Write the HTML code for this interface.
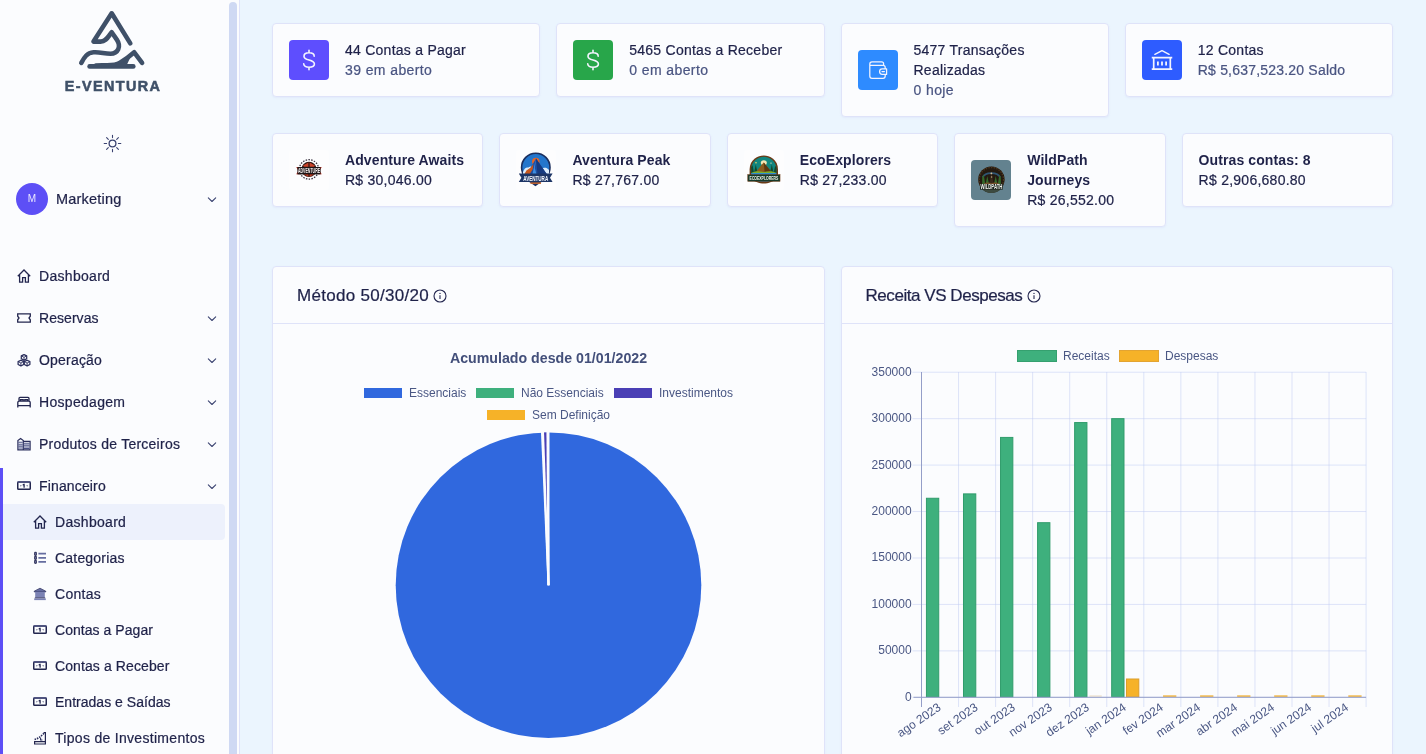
<!DOCTYPE html>
<html lang="pt-BR">
<head>
<meta charset="utf-8">
<title>E-Ventura - Financeiro</title>
<style>
*{box-sizing:border-box;margin:0;padding:0}
html,body{width:1426px;height:754px;overflow:hidden}
body{font-family:"Liberation Sans",sans-serif;font-size:14px;color:#1f2249;background:#ebf5fe;position:relative}
.abs{position:absolute}
/* ---------- sidebar ---------- */
#side{position:absolute;left:0;top:0;width:240px;height:754px;background:#fbfcfe;border-right:1px solid #dfe3f9;overflow:hidden}
#thumb{position:absolute;left:229px;top:2px;width:8px;height:800px;border-radius:4px;background:#cfd9f3}
#logo{position:absolute;left:60px;top:4px;width:104px;height:92px}
.nav{position:absolute;left:0;width:229px;height:36px;font-size:14px;line-height:36px;color:#1f2249;white-space:nowrap}
.nav svg.ic{position:absolute;left:17px;top:11px;width:14px;height:14px}
.nav span{position:absolute;left:39px;top:0;letter-spacing:.3px}
.nav svg.ch{position:absolute;left:207px;top:15px;width:10px;height:8px}
.sub svg.ic{left:33px}
.sub span{left:55px}
#fin{position:absolute;left:0;top:468px;width:3px;height:300px;background:#5d4ff6}
#act{position:absolute;left:3px;top:504px;width:222px;height:36px;background:#edf1fc;border-radius:0 4px 4px 0}
/* ---------- main ---------- */
#main{position:absolute;left:0;top:0;width:1426px;height:754px;will-change:transform}
#sidecontent{position:absolute;left:0;top:0;width:239px;height:754px;will-change:transform}
.card{position:absolute;background:#fbfcfe;border:1px solid #dfe3f9;border-radius:4px;box-shadow:0 1px 2px rgba(190,200,240,.22)}
.kpi .ib{position:absolute;left:16px;top:16px;width:40px;height:40px;border-radius:4px}
.kpi .tx{position:absolute;left:72px;top:16px;line-height:20px;font-size:14px;white-space:nowrap;letter-spacing:.25px}
.kpi .tx b{font-weight:bold;letter-spacing:.1px}
.kpi .tx i{font-style:normal;color:#4a5582;letter-spacing:.4px}
.ph{position:absolute;left:0;top:0;right:0;height:57px;border-bottom:1px solid #dfe3f9}
.ph h3{position:absolute;left:24px;top:19px;font-size:17px;font-weight:normal;line-height:20px;letter-spacing:.35px;white-space:nowrap;color:#1f2249}
svg text{font-family:"Liberation Sans",sans-serif}
.nav span,.kpi .tx,.ph h3,.mk{-webkit-text-stroke:.22px currentColor}
.kpi .tx b{-webkit-text-stroke:0}
</style>
</head>
<body>

<!-- ================= SIDEBAR ================= -->
<div id="side">
  <div id="sidecontent">
<svg id="logo" style="left:0;top:0;width:229px;height:100px" viewBox="0 0 229 100">
  <g fill="none" stroke="#3f5068" stroke-width="4.6" stroke-linecap="round" stroke-linejoin="round">
    <path d="M130.3 43.4 L111.7 13.3 L93.5 41.6 H100.5 C106.5 41.6 108 36.5 111.7 32.3 L116.8 39.6 C121.5 46.5 118 53.7 110.5 53.7 C104 53.7 100 51.8 93.5 52.3 C86.5 52.9 84 58 81.3 62.9"/>
    <path d="M89.6 66.4 H133.3"/>
    <path d="M96 65.6 C104 64.2 112.5 67.2 120 62.8 C126.5 59 130 56 134.2 52.3 L142.1 62.9"/>
  </g>
  <path d="M100 66 C108 65 114 67 120.5 63.5 C125 61 128 58.5 131 56 L127 64.5 L128 66.5 Z" fill="#3f5068"/>
  <text x="113" y="91" text-anchor="middle" font-size="14.4" font-weight="bold" fill="#3f5068" stroke="#3f5068" stroke-width=".55" letter-spacing="1.4">E-VENTURA</text>
</svg>
<svg class="abs" style="left:103px;top:134px;width:19px;height:19px" viewBox="0 0 19 19"><g fill="none" stroke="#3a4270" stroke-width="1.1" stroke-linecap="round"><circle cx="9.5" cy="9.5" r="3.4" stroke-width="1.3"/><path d="M9.5 1.2V3.6M9.5 15.4V17.8M1.2 9.5H3.6M15.4 9.5H17.8M3.6 3.6L5.3 5.3M13.7 13.7L15.4 15.4M3.6 15.4L5.3 13.7M13.7 5.3L15.4 3.6"/></g></svg>
<div class="abs" style="left:16px;top:183px;width:32px;height:32px;border-radius:50%;background:#5d4ff6;color:#e9e7ff;font-size:10px;line-height:32px;text-align:center">M</div>
<div class="abs mk" style="left:56px;top:189px;font-size:14.5px;line-height:20px;letter-spacing:.2px;color:#1f2249">Marketing</div>
<svg class="abs" style="left:207px;top:196px;width:10px;height:8px" viewBox="0 0 10 8"><path d="M1.3 1.9 L5 5.5 L8.7 1.9" fill="none" stroke="#3a4270" stroke-width="1.05" stroke-linecap="round" stroke-linejoin="round"/></svg>
<div id="fin"></div><div id="act"></div>
<div class="nav" style="top:258px"><svg class="ic" viewBox="0 0 14 14"><path d="M0.8 7.2 L7 1 L13.2 7.2 M2.6 6 V13.2 H5.6 V8.6 H8.4 V13.2 H11.4 V6" fill="none" stroke="#23264f" stroke-width="1.3" stroke-linejoin="miter"/></svg><span>Dashboard</span></div>
<div class="nav" style="top:300px"><svg class="ic" viewBox="0 0 14 14"><path d="M0.7 2.8 H13.3 V5.2 L12 7 L13.3 8.8 V11.2 H0.7 V8.8 L2 7 L0.7 5.2 Z" fill="none" stroke="#23264f" stroke-width="1.3" stroke-linejoin="miter"/></svg><span style="letter-spacing:0.05px">Reservas</span><svg class="ch" viewBox="0 0 10 8"><path d="M1.3 1.9 L5 5.5 L8.7 1.9" fill="none" stroke="#3a4270" stroke-width="1.05" stroke-linecap="round" stroke-linejoin="round"/></svg></div>
<div class="nav" style="top:342px"><svg class="ic" viewBox="0 0 14 14"><g transform="translate(0 .6)"><path d="M7 1 L9.7 2.3 V5.1 L7 6.5 L4.3 5.1 V2.3 Z M3.9 6.6 L6.7 8 V10.9 L3.9 12.3 L1.1 10.9 V8 Z M10.1 6.6 L12.9 8 V10.9 L10.1 12.3 L7.3 10.9 V8 Z" fill="none" stroke="#2a2e5c" stroke-width="1.25" stroke-linejoin="round"/><path d="M4.3 2.3 L7 3.7 L9.7 2.3 M7 3.7 V6.5 M1.1 8 L3.9 9.4 L6.7 8 M3.9 9.4 V12.3 M7.3 8 L10.1 9.4 L12.9 8 M10.1 9.4 V12.3" fill="none" stroke="#2a2e5c" stroke-width=".9"/></g></svg><span style="letter-spacing:0.2px">Operação</span><svg class="ch" viewBox="0 0 10 8"><path d="M1.3 1.9 L5 5.5 L8.7 1.9" fill="none" stroke="#3a4270" stroke-width="1.05" stroke-linecap="round" stroke-linejoin="round"/></svg></div>
<div class="nav" style="top:384px"><svg class="ic" viewBox="0 0 14 14"><path d="M0.8 12.6 V7.6 C0.8 6.6 1.4 6.2 2.2 6.2 H11.8 C12.6 6.2 13.2 6.6 13.2 7.6 V12.6 M0.8 10.6 H13.2 M2 6.2 V3.4 C2 2.8 2.4 2.4 3 2.4 H11 C11.6 2.4 12 2.8 12 3.4 V6.2 M3.5 6.2 V4.7 H6.2 V6.2 M7.8 6.2 V4.7 H10.5 V6.2" fill="none" stroke="#23264f" stroke-width="1.3" stroke-linejoin="miter"/></svg><span>Hospedagem</span><svg class="ch" viewBox="0 0 10 8"><path d="M1.3 1.9 L5 5.5 L8.7 1.9" fill="none" stroke="#3a4270" stroke-width="1.05" stroke-linecap="round" stroke-linejoin="round"/></svg></div>
<div class="nav" style="top:426px"><svg class="ic" viewBox="0 0 14 14"><path d="M0.9 12.8 V3.5 L3.6 1.5 L6.3 3.5 V12.8 M6.3 4.4 H13.1 V12.8 M0.3 12.9 H13.7" fill="none" stroke="#2a2e5c" stroke-width="1.2"/><path d="M1.4 5.3 H5.8 M1.4 7.2 H5.8 M1.4 9.1 H5.8 M1.4 11 H5.8 M6.8 6.3 H12.6 M6.8 8.1 H12.6 M6.8 9.9 H12.6 M6.8 11.5 H12.6" fill="none" stroke="#4b5185" stroke-width="1.05"/></svg><span style="letter-spacing:0.25px">Produtos de Terceiros</span><svg class="ch" viewBox="0 0 10 8"><path d="M1.3 1.9 L5 5.5 L8.7 1.9" fill="none" stroke="#3a4270" stroke-width="1.05" stroke-linecap="round" stroke-linejoin="round"/></svg></div>
<div class="nav" style="top:468px"><svg class="ic" viewBox="0 0 14 14"><rect x=".75" y="2.95" width="12.5" height="7.4" rx=".8" fill="none" stroke="#23264f" stroke-width="1.5"/><path d="M0.4 3 H13.6" stroke="#4b5185" stroke-width="1.2"/><path d="M7.1 5.3 V8.2 M6.2 5.9 L7.1 5.3" fill="none" stroke="#23264f" stroke-width="1.3" stroke-linecap="round"/><path d="M3.5 6 L4.7 6.7 L3.5 7.4 Z M10.5 6 L9.3 6.7 L10.5 7.4 Z" fill="#23264f"/></svg><span style="letter-spacing:0.15px">Financeiro</span><svg class="ch" viewBox="0 0 10 8"><path d="M1.3 1.9 L5 5.5 L8.7 1.9" fill="none" stroke="#3a4270" stroke-width="1.05" stroke-linecap="round" stroke-linejoin="round"/></svg></div>
<div class="nav sub" style="top:504px"><svg class="ic" viewBox="0 0 14 14"><path d="M0.8 7.2 L7 1 L13.2 7.2 M2.6 6 V13.2 H5.6 V8.6 H8.4 V13.2 H11.4 V6" fill="none" stroke="#23264f" stroke-width="1.3" stroke-linejoin="miter"/></svg><span>Dashboard</span></div>
<div class="nav sub" style="top:540px"><svg class="ic" viewBox="0 0 14 14"><path d="M1.7 1.3 H3.3 V4.3 H1.7 Z M1.7 5.3 H3.3 V8.3 H1.7 Z M1.7 9.3 H3.3 V12.3 H1.7 Z" fill="#8a90bd" stroke="#23264f" stroke-width="1"/><path d="M5.4 2.7 H13 M5.4 6.8 H13 M5.4 10.9 H13" fill="none" stroke="#666da0" stroke-width="1.7"/></svg><span style="letter-spacing:0.2px">Categorias</span></div>
<div class="nav sub" style="top:576px"><svg class="ic" viewBox="0 0 14 14"><path d="M7 1.2 L12.8 4.2 V4.9 H1.2 V4.2 Z" fill="#656ca0" stroke="#2a2e5c" stroke-width=".7"/><rect x="2.2" y="4.9" width="9.6" height="5.8" fill="#7b82b4"/><rect x="1.8" y="10.5" width="10.4" height=".9" fill="#22254d"/><rect x="1.2" y="11.4" width="11.6" height="1.7" fill="#7b82b4"/></svg><span>Contas</span></div>
<div class="nav sub" style="top:612px"><svg class="ic" viewBox="0 0 14 14"><rect x=".75" y="2.95" width="12.5" height="7.4" rx=".8" fill="none" stroke="#23264f" stroke-width="1.5"/><path d="M0.4 3 H13.6" stroke="#4b5185" stroke-width="1.2"/><path d="M7.1 5.3 V8.2 M6.2 5.9 L7.1 5.3" fill="none" stroke="#23264f" stroke-width="1.3" stroke-linecap="round"/><path d="M3.5 6 L4.7 6.7 L3.5 7.4 Z M10.5 6 L9.3 6.7 L10.5 7.4 Z" fill="#23264f"/></svg><span style="letter-spacing:0.05px">Contas a Pagar</span></div>
<div class="nav sub" style="top:648px"><svg class="ic" viewBox="0 0 14 14"><rect x=".75" y="2.95" width="12.5" height="7.4" rx=".8" fill="none" stroke="#23264f" stroke-width="1.5"/><path d="M0.4 3 H13.6" stroke="#4b5185" stroke-width="1.2"/><path d="M7.1 5.3 V8.2 M6.2 5.9 L7.1 5.3" fill="none" stroke="#23264f" stroke-width="1.3" stroke-linecap="round"/><path d="M3.5 6 L4.7 6.7 L3.5 7.4 Z M10.5 6 L9.3 6.7 L10.5 7.4 Z" fill="#23264f"/></svg><span style="letter-spacing:0.1px">Contas a Receber</span></div>
<div class="nav sub" style="top:684px"><svg class="ic" viewBox="0 0 14 14"><rect x=".75" y="2.95" width="12.5" height="7.4" rx=".8" fill="none" stroke="#23264f" stroke-width="1.5"/><path d="M0.4 3 H13.6" stroke="#4b5185" stroke-width="1.2"/><path d="M7.1 5.3 V8.2 M6.2 5.9 L7.1 5.3" fill="none" stroke="#23264f" stroke-width="1.3" stroke-linecap="round"/><path d="M3.5 6 L4.7 6.7 L3.5 7.4 Z M10.5 6 L9.3 6.7 L10.5 7.4 Z" fill="#23264f"/></svg><span style="letter-spacing:0.02px">Entradas e Saídas</span></div>
<div class="nav sub" style="top:720px"><svg class="ic" viewBox="0 0 14 14"><path d="M1.6 10.6 H12.4 V13 H1.6 Z M12.4 10.6 V1.6 H10.6" fill="none" stroke="#23264f" stroke-width="1.2"/><path d="M1.6 8.6 C5 7.6 8 5.4 11 2.2" fill="none" stroke="#2a2e5c" stroke-width="1.6" stroke-dasharray="1.5 1"/><path d="M7.6 6.8 V9 H9.4" fill="none" stroke="#2a2e5c" stroke-width="1.1"/></svg><span>Tipos de Investimentos</span></div>
</div>
  <div id="thumb"></div>
</div>

<!-- ================= MAIN ================= -->
<div id="main">
<div class="card kpi" style="left:272px;top:23px;width:268.25px;height:74px"><div class="ib" style="background:#5e4efe;top:16px"><svg width="40" height="40" viewBox="0 0 40 40"><path d="M20 10.3 V12.8 M20 27.2 V29.7 M25.2 16.2 C25.2 14 23 12.8 20 12.8 C17 12.8 15 14 15 16.2 C15 18.6 17.2 19.3 20 20 C22.8 20.7 25.4 21.5 25.4 24 C25.4 26.1 23 27.2 20 27.2 C17 27.2 14.7 26.1 14.7 23.8" fill="none" stroke="#f3f4ff" stroke-linecap="round" stroke-linejoin="round" stroke-width="1.6"/></svg></div><div class="tx" style="top:16px">44 Contas a Pagar<br><i>39 em aberto</i></div></div>
<div class="card kpi" style="left:556.25px;top:23px;width:268.25px;height:74px"><div class="ib" style="background:#28a64a;top:16px"><svg width="40" height="40" viewBox="0 0 40 40"><path d="M20 10.3 V12.8 M20 27.2 V29.7 M25.2 16.2 C25.2 14 23 12.8 20 12.8 C17 12.8 15 14 15 16.2 C15 18.6 17.2 19.3 20 20 C22.8 20.7 25.4 21.5 25.4 24 C25.4 26.1 23 27.2 20 27.2 C17 27.2 14.7 26.1 14.7 23.8" fill="none" stroke="#f3f4ff" stroke-linecap="round" stroke-linejoin="round" stroke-width="1.6"/></svg></div><div class="tx" style="top:16px">5465 Contas a Receber<br><i>0 em aberto</i></div></div>
<div class="card kpi" style="left:840.5px;top:23px;width:268.25px;height:94px"><div class="ib" style="background:#2e8bff;top:26px"><svg width="40" height="40" viewBox="0 0 40 40"><path d="M11.8 14 C11.8 12.6 12.8 11.8 14 11.8 H23.6 C24.8 11.8 25.6 12.6 25.6 13.8 V15.4 H11.8 M11.8 14 V26 C11.8 27.4 12.8 28.4 14 28.4 H25 C26.4 28.4 27.2 27.4 27.2 26 V24.6 M27.2 18.6 V17.4 C27.2 16.2 26.4 15.4 25 15.4 M28.6 18.8 H24.2 C22.6 18.8 21.6 20 21.6 21.6 C21.6 23.2 22.6 24.4 24.2 24.4 H28.6 Z M24 21.6 H26.4" fill="none" stroke="#f3f4ff" stroke-linecap="round" stroke-linejoin="round" stroke-width="1.25"/></svg></div><div class="tx" style="top:16px">5477 Transações<br>Realizadas<br><i>0 hoje</i></div></div>
<div class="card kpi" style="left:1124.75px;top:23px;width:268.25px;height:74px"><div class="ib" style="background:#2e5cff;top:16px"><svg width="40" height="40" viewBox="0 0 40 40"><path d="M12.9 14.3 L20 10.7 L27.1 14.3" fill="none" stroke="#f3f4ff" stroke-linecap="round" stroke-linejoin="round" stroke-width="1.5"/><path d="M10.6 17.6 H29.4 M10.6 29.2 H29.4 M11.7 17.6 V29.2 M28.3 17.6 V29.2" fill="none" stroke="#f3f4ff" stroke-width="1.7" stroke-linecap="square"/><path d="M15.9 21.4 V25.6 M20 21.4 V25.6 M24.1 21.4 V25.6" fill="none" stroke="#f3f4ff" stroke-width="1.8"/></svg></div><div class="tx" style="top:16px">12 Contas<br><i style="letter-spacing:.2px">R$ 5,637,523.20 Saldo</i></div></div>
<div class="card kpi" style="left:272px;top:133px;width:211.4px;height:74px"><div class="ib" style="background:transparent;top:16px"><svg width="40" height="40" viewBox="0 0 40 40"><rect width="40" height="40" rx="4" fill="#fdfdfe"/><g transform="translate(0 -.9)">
<circle cx="20" cy="20.3" r="9.7" fill="none" stroke="#3b3340" stroke-width="1.3" stroke-dasharray="1.5 1.3"/>
<circle cx="20" cy="20.3" r="7.7" fill="#2e1613"/><path d="M14 16.4 L19.4 13.4 V17.6 H15 Z M26 16.4 L20.6 13.4 V17.6 H25 Z" fill="#c9432a"/><path d="M15 25.4 L19.4 27.6 V25 H15.4 Z M25 25.4 L20.6 27.6 V25 H24.6 Z" fill="#c23a22"/>
<path d="M7.2 18 L9.4 21.6 L7.2 25.2 H11 V18 Z M32.8 18 L30.6 21.6 L32.8 25.2 H29 V18 Z" fill="#d23b2a"/><rect x="8.4" y="17.9" width="23.2" height="7.4" fill="#1d1516"/>
<text x="8.9" y="24" font-size="6.4" font-weight="bold" fill="#f6eeee" textLength="22.2" lengthAdjust="spacingAndGlyphs">ADVENTURE</text></g></svg></div><div class="tx" style="top:16px"><b>Adventure Awaits</b><br>R$ 30,046.00</div></div>
<div class="card kpi" style="left:499.4px;top:133px;width:211.4px;height:74px"><div class="ib" style="background:transparent;top:16px"><svg width="40" height="40" viewBox="0 0 40 40"><rect width="40" height="40" rx="4" fill="#fdfdfe"/><g transform="translate(-.6 -2)">
<path d="M20 38.2 L11 32 H29 Z" fill="#1c2f5e"/>
<circle cx="20.4" cy="19.4" r="14.2" fill="#2476cc" stroke="#1c2f5e" stroke-width="1.6"/>
<circle cx="20.4" cy="13.6" r="3.8" fill="#e1652a"/>
<path d="M7.6 24 C9 20 11 19 13 19.6 C15 18 17 18.4 18 19 L14 27 H7.6 Z" fill="#dcecfb"/><path d="M33.6 22 C31 19 28 19.6 26.6 21 L30 27 H33.6 Z" fill="#dcecfb"/>
<path d="M20.6 10.4 L33.4 29 H7.4 L15.4 19.6 Z" fill="#1d4fa4"/><path d="M20.6 10.4 L22.4 29 H33.4 Z" fill="#163a80"/><path d="M20.6 10.4 L19.4 20 L21.8 29 H16.4 Z" fill="#3f8ee0"/>
<path d="M7.4 29 L11 22.6 L15.4 19.6 L18 16 L17.4 21 L15 25 L13 29 Z" fill="#c8581e"/>
<path d="M3.4 25.6 H37.2 L34.6 29.8 L37.2 34 H3.4 L6 29.8 Z" fill="#1d3566"/>
<text x="7.8" y="32.9" font-size="8" font-weight="bold" fill="#f4f8ff" textLength="25" lengthAdjust="spacingAndGlyphs">AVENTURA</text>
<rect x="15" y="34.4" width="10.6" height="1.5" fill="#c8682e"/></g></svg></div><div class="tx" style="top:16px"><b>Aventura Peak</b><br>R$ 27,767.00</div></div>
<div class="card kpi" style="left:726.8px;top:133px;width:211.4px;height:74px"><div class="ib" style="background:transparent;top:16px"><svg width="40" height="40" viewBox="0 0 40 40"><rect width="40" height="40" rx="4" fill="#fdfdfe"/><g transform="translate(0 .94) scale(1 .845)">
<path d="M5.6 31 V22 C5.6 10 14 5.4 19.8 5.4 C25.6 5.4 34 10 34 22 V31 C30 36.4 24 38.4 19.8 38.4 C15.6 38.4 9.6 36.4 5.6 31 Z" fill="#6b3a16"/>
<path d="M7.2 26 V22 C7.2 11.6 14.6 7 19.8 7 C25 7 32.4 11.6 32.4 22 V26 Z" fill="#12867f"/>
<circle cx="19.8" cy="14" r="3" fill="#f6e6b4"/><circle cx="12" cy="14" r=".8" fill="#f4d46a"/><circle cx="27" cy="14.4" r=".7" fill="#f4e9c0"/>
<path d="M12 25 L17.6 16.4 L19.8 13.6 L22 17 L27.6 25 Z" fill="#8a5a1e"/><path d="M19.8 13.6 L22 17 L27.6 25 H20.6 Z" fill="#5a3712"/>
<path d="M7.2 26 V19 L8.6 17 L10 26 Z M10 26 L11.8 16 L13.6 26 Z M26 26 L27.8 16 L29.6 26 Z M29.6 26 L31.2 17.4 L32.4 20 V26 Z" fill="#16472c"/>
<path d="M7.2 26 C11 23.4 15 23.6 19.8 24.8 C24.6 23.6 28.6 23.4 32.4 26 Z" fill="#7fae2a"/>
<path d="M7.2 26 H32.4 V31 C28 35.6 23.6 36.8 19.8 36.8 C16 36.8 11.6 35.6 7.2 31 Z" fill="#2b8ed0"/>
<rect x="3.8" y="28" width="32.2" height="8" fill="#173a2a" stroke="#6b3a16" stroke-width=".6"/>
<text x="5.6" y="34.8" font-size="7.2" font-weight="bold" fill="#eef4ea" textLength="28.6" lengthAdjust="spacingAndGlyphs">ECOEXPLORERS</text></g></svg></div><div class="tx" style="top:16px"><b>EcoExplorers</b><br>R$ 27,233.00</div></div>
<div class="card kpi" style="left:954.2px;top:133px;width:211.4px;height:94px"><div class="ib" style="background:transparent;top:26px"><svg width="40" height="40" viewBox="0 0 40 40"><rect width="40" height="40" rx="4" fill="#63828f"/>
<circle cx="20.4" cy="19.6" r="13.2" fill="#241a10"/><circle cx="20.4" cy="19.6" r="12.2" fill="none" stroke="#4d351d" stroke-width="1.5" stroke-dasharray="1.4 1.3"/>
<path d="M11.6 17.4 C14 11.6 26.8 11.6 29.2 17.4" fill="none" stroke="#2f5573" stroke-width="1.7"/>
<path d="M11.2 24 V17.4 L12.7 14.6 L14.2 24 Z M14.6 24 L16.3 16 L18 24 Z M23 24 L24.7 16 L26.4 24 Z M26.8 24 L28.3 14.8 L29.8 17.6 V24 Z" fill="#346a2b"/>
<path d="M18.4 24 L20.4 12.6 L22.6 24 Z" fill="#3a2a1c"/><circle cx="20.4" cy="13.4" r=".9" fill="#cdbb98"/><circle cx="20.6" cy="17" r=".8" fill="#b9a27a"/>
<path d="M11.4 25 C15 21.6 18 22.4 20.4 23.2 C23 22.4 26 21.6 29.6 25 Z" fill="#76502a"/>
<rect x="9" y="24" width="22.8" height="5.6" fill="#1a241d"/>
<text x="9.4" y="28.9" font-size="6.4" font-weight="bold" fill="#f2f2ec" textLength="22" lengthAdjust="spacingAndGlyphs">WILDPATH</text>
<path d="M11.4 29.6 H29.4 C27 32 24 33 20.4 33 C16.8 33 13.8 32 11.4 29.6 Z" fill="#3c4a40"/></svg></div><div class="tx" style="top:16px"><b>WildPath</b><br><b>Journeys</b><br>R$ 26,552.00</div></div>
<div class="card kpi" style="left:1181.6px;top:133px;width:211.4px;height:74px"><div class="tx" style="left:16px;top:16px"><b>Outras contas: 8</b><br>R$ 2,906,680.80</div></div>
<div class="card" style="left:272px;top:266px;width:552.5px;height:560px">
<div class="ph"><h3 style="letter-spacing:.3px">Método 50/30/20</h3><svg class="abs" style="left:159.5px;top:21.5px;width:14px;height:14px" viewBox="0 0 14 14"><circle cx="7" cy="7" r="6" fill="none" stroke="#23264f" stroke-width="1.1"/><path d="M7 6.3V9.9" stroke="#23264f" stroke-width="1.1"/><circle cx="7" cy="4.4" r=".7" fill="#23264f"/></svg></div>
</div>
<svg class="abs" style="left:272px;top:266px" width="553" height="500" viewBox="0 0 553 500"><text x="276.5" y="96.5" text-anchor="middle" font-size="14.2" font-weight="bold" fill="#434f7a">Acumulado desde 01/01/2022</text><rect x="92" y="122" width="38" height="10" fill="#3068de"/><text x="137" y="131.3" font-size="12" fill="#4a5784">Essenciais</text><rect x="204" y="122" width="38" height="10" fill="#3eb07d"/><text x="249" y="131.3" font-size="12" fill="#4a5784">Não Essenciais</text><rect x="342" y="122" width="38" height="10" fill="#4a3fb5"/><text x="387" y="131.3" font-size="12" fill="#4a5784">Investimentos</text><rect x="215" y="144" width="38" height="10" fill="#f6b228"/><text x="260" y="153.3" font-size="12" fill="#4a5784">Sem Definição</text><circle cx="276.5" cy="319.20000000000005" r="152.8" fill="#3068de"/><path d="M276.50 319.20 L269.97 166.54 A152.80 152.80 0 0 1 271.03 166.50 Z" fill="#3eb07d"/><path d="M276.50 319.20 L271.03 166.50 A152.80 152.80 0 0 1 275.43 166.40 Z" fill="#4a3fb5"/><path d="M276.50 319.20 L275.43 166.40 A152.80 152.80 0 0 1 276.50 166.40 Z" fill="#f6b228"/><path d="M276.5 319.20000000000005 L269.95 166.04" stroke="#fbfcfe" stroke-width="2"/><path d="M276.5 319.20000000000005 L271.02 166.00" stroke="#fbfcfe" stroke-width="2"/><path d="M276.5 319.20000000000005 L275.43 165.90" stroke="#fbfcfe" stroke-width="2"/><path d="M276.5 319.20000000000005 L276.50 165.90" stroke="#fbfcfe" stroke-width="2"/></svg>
<div class="card" style="left:840.5px;top:266px;width:552.5px;height:560px">
<div class="ph"><h3 style="letter-spacing:-.45px">Receita VS Despesas</h3><svg class="abs" style="left:185.5px;top:21.5px;width:14px;height:14px" viewBox="0 0 14 14"><circle cx="7" cy="7" r="6" fill="none" stroke="#23264f" stroke-width="1.1"/><path d="M7 6.3V9.9" stroke="#23264f" stroke-width="1.1"/><circle cx="7" cy="4.4" r=".7" fill="#23264f"/></svg></div>
</div>
<svg class="abs" style="left:841px;top:266px" width="553" height="500" viewBox="0 0 553 500"><path d="M80.50 106.00 V441 M117.55 106.00 V441 M154.60 106.00 V441 M191.65 106.00 V441 M228.70 106.00 V441 M265.75 106.00 V441 M302.80 106.00 V441 M339.85 106.00 V441 M376.90 106.00 V441 M413.95 106.00 V441 M451.00 106.00 V441 M488.05 106.00 V441 M525.10 106.00 V441 M71.5 431.30 H525.10 M71.5 384.86 H525.10 M71.5 338.42 H525.10 M71.5 291.98 H525.10 M71.5 245.54 H525.10 M71.5 199.10 H525.10 M71.5 152.66 H525.10 M71.5 106.22 H525.10 " fill="none" stroke="#bfcbf3" stroke-width=".5"/><rect x="176.5" y="84.5" width="39" height="11" fill="#3eb07d" stroke="#35a06f" stroke-width="1"/><text x="222" y="94" font-size="12" fill="#4a5784">Receitas</text><rect x="278.5" y="84.5" width="39" height="11" fill="#f6b228" stroke="#e3a432" stroke-width="1"/><text x="324" y="94" font-size="12" fill="#4a5784">Despesas</text><text x="70.60000000000002" y="434.80" text-anchor="end" font-size="12" fill="#4a5784">0</text><text x="70.60000000000002" y="388.36" text-anchor="end" font-size="12" fill="#4a5784">50000</text><text x="70.60000000000002" y="341.92" text-anchor="end" font-size="12" fill="#4a5784">100000</text><text x="70.60000000000002" y="295.48" text-anchor="end" font-size="12" fill="#4a5784">150000</text><text x="70.60000000000002" y="249.04" text-anchor="end" font-size="12" fill="#4a5784">200000</text><text x="70.60000000000002" y="202.60" text-anchor="end" font-size="12" fill="#4a5784">250000</text><text x="70.60000000000002" y="156.16" text-anchor="end" font-size="12" fill="#4a5784">300000</text><text x="70.60000000000002" y="109.72" text-anchor="end" font-size="12" fill="#4a5784">350000</text><rect x="85.44" y="232.26" width="12.3" height="198.54" fill="#3eb07d" stroke="#309c6b" stroke-width="1"/><rect x="122.49" y="227.89" width="12.3" height="202.91" fill="#3eb07d" stroke="#309c6b" stroke-width="1"/><rect x="159.54" y="171.42" width="12.3" height="259.38" fill="#3eb07d" stroke="#309c6b" stroke-width="1"/><rect x="196.59" y="256.69" width="12.3" height="174.11" fill="#3eb07d" stroke="#309c6b" stroke-width="1"/><rect x="233.64" y="156.56" width="12.3" height="274.24" fill="#3eb07d" stroke="#309c6b" stroke-width="1"/><rect x="248.44" y="429.30" width="12.3" height="1.5" fill="#efe4d2"/><rect x="270.69" y="152.66" width="12.3" height="278.14" fill="#3eb07d" stroke="#309c6b" stroke-width="1"/><rect x="285.49" y="413.00" width="12.3" height="17.80" fill="#f6b228" stroke="#dc9d2a" stroke-width="1"/><rect x="322.04" y="429.40" width="13.3" height="1.4" fill="#f0ad2c"/><rect x="359.09" y="429.40" width="13.3" height="1.4" fill="#f0ad2c"/><rect x="396.14" y="429.40" width="13.3" height="1.4" fill="#f0ad2c"/><rect x="433.19" y="429.40" width="13.3" height="1.4" fill="#f0ad2c"/><rect x="470.24" y="429.40" width="13.3" height="1.4" fill="#f0ad2c"/><rect x="507.29" y="429.40" width="13.3" height="1.4" fill="#f0ad2c"/><path d="M80.5 106 V441 M72.5 431.29999999999995 H525.10" fill="none" stroke="#949ec8" stroke-width="1"/><text transform="translate(100.82 443.10) rotate(-34.5)" text-anchor="end" font-size="12" fill="#4a5784">ago 2023</text><text transform="translate(137.87 443.10) rotate(-34.5)" text-anchor="end" font-size="12" fill="#4a5784">set 2023</text><text transform="translate(174.93 443.10) rotate(-34.5)" text-anchor="end" font-size="12" fill="#4a5784">out 2023</text><text transform="translate(211.98 443.10) rotate(-34.5)" text-anchor="end" font-size="12" fill="#4a5784">nov 2023</text><text transform="translate(249.03 443.10) rotate(-34.5)" text-anchor="end" font-size="12" fill="#4a5784">dez 2023</text><text transform="translate(286.08 443.10) rotate(-34.5)" text-anchor="end" font-size="12" fill="#4a5784">jan 2024</text><text transform="translate(323.13 443.10) rotate(-34.5)" text-anchor="end" font-size="12" fill="#4a5784">fev 2024</text><text transform="translate(360.18 443.10) rotate(-34.5)" text-anchor="end" font-size="12" fill="#4a5784">mar 2024</text><text transform="translate(397.23 443.10) rotate(-34.5)" text-anchor="end" font-size="12" fill="#4a5784">abr 2024</text><text transform="translate(434.28 443.10) rotate(-34.5)" text-anchor="end" font-size="12" fill="#4a5784">mai 2024</text><text transform="translate(471.33 443.10) rotate(-34.5)" text-anchor="end" font-size="12" fill="#4a5784">jun 2024</text><text transform="translate(508.38 443.10) rotate(-34.5)" text-anchor="end" font-size="12" fill="#4a5784">jul 2024</text></svg>
</div>

</body>
</html>
